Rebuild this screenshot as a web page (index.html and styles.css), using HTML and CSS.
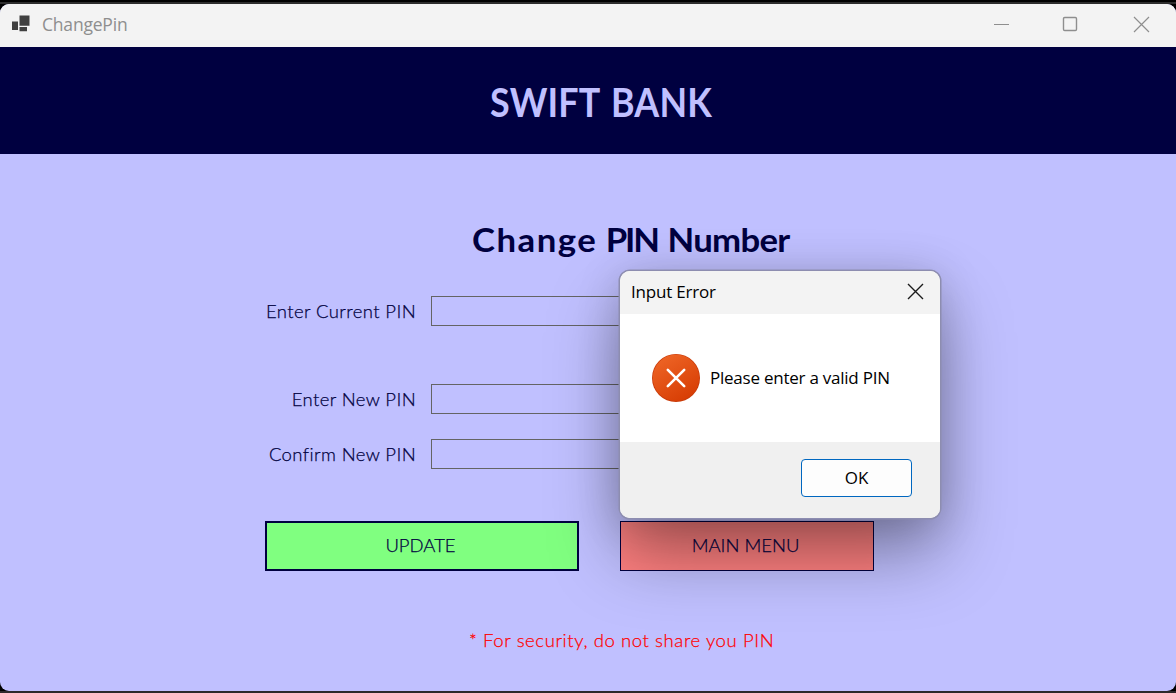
FILE: index.html
```html
<!DOCTYPE html>
<html lang="en">
<head>
<meta charset="utf-8">
<title>ChangePin</title>
<link rel="stylesheet" href="styles.css">
</head>
<body>
<div class="window">
  <div class="titlebar">
    <svg class="app-icon" width="20" height="18" viewBox="0 0 20 18"><path fill="#404040" d="M8.500 .5h10v10.200h-10zM1 6.500h6v8.500H1zM8.500 12h7.500v4.200H8.500z"/></svg>
    <span class="app-title">ChangePin</span>
    <svg class="controls" width="160" height="18" viewBox="0 0 160 18" fill="none" stroke="#8e8e8e"><path d="M1 8.500h15"/><rect x="70.500" y="1.500" width="13" height="13" rx="1.200" stroke-width="1.400"/><path stroke-width="1.200" d="M141 1l15 15M156 1l-15 15"/></svg>
  </div>
  <header class="banner"><h1 class="bank">SWIFT BANK</h1></header>
  <main class="content">
    <h2 class="heading"><span class="wide">Change</span> <span class="tight">PIN</span> <span class="snug">Number</span></h2>
    <div class="field first"><label class="label" for="current">Enter Current PIN</label><input class="input" id="current"></div>
    <div class="field second"><label class="label" for="new">Enter New PIN</label><input class="input" id="new"></div>
    <div class="field"><label class="label" for="confirm">Confirm New PIN</label><input class="input" id="confirm"></div>
    <div class="actions">
      <button class="btn update">UPDATE</button>
      <button class="btn menu">MAIN MENU</button>
    </div>
    <p class="note">* For security, do not share you PIN</p>
  </main>
</div>
<section class="dialog" role="alertdialog">
  <div class="dialog-title"><span>Input Error</span><svg width="17" height="17" viewBox="0 0 17 17" fill="none" stroke="#1b1b1b" stroke-width="1.400"><path d="M1 1l15 15M16 1L1 16"/></svg></div>
  <div class="dialog-body">
    <svg width="48" height="48" viewBox="0 0 48 48"><defs><linearGradient id="g" x1=".2" y1="0" x2=".8" y2="1"><stop offset="0" stop-color="#ee6526"/><stop offset="1" stop-color="#d63b02"/></linearGradient></defs><circle cx="24" cy="24" r="24" fill="#c93a08"/><circle cx="24" cy="23.800" r="23.200" fill="url(#g)"/><path d="M15.800 15.800l16.400 16.400M32.200 15.800L15.800 32.200" stroke="#fff" stroke-width="2.600" stroke-linecap="round"/></svg>
    <span class="message">Please enter a valid PIN</span>
  </div>
  <div class="dialog-footer"><button class="ok">OK</button></div>
</section>
</body>
</html>
```
FILE: styles.css
```css
* { box-sizing: border-box; }
body {
  margin: 0;
  height: 693px;
  overflow: hidden;
  padding-top: 4px;
  background: linear-gradient(#000 2px, #2d2d2d 2px, #2d2d2d 4px, #000 4px, #000 691px, #2d2a2d 691px);
  font-family: Lato, "Liberation Sans", sans-serif;
  color: #000040;
}
h1, h2, p { margin: 0; }
.window {
  height: 687px;
  border-radius: 9px;
  overflow: hidden;
  background: #c0c0ff;
}
.titlebar {
  height: 43px;
  display: flex;
  align-items: center;
  padding: 0 23px 2px 11px;
  background: #f3f3f3;
  font-family: "Open Sans", "Noto Sans", sans-serif;
  color: #8e8e8e;
}
.app-icon { margin-bottom: 1px; }
.app-title { margin: 0 0 2px 11px; font-size: 17.5px; letter-spacing: -0.2px; }
.controls { margin-left: auto; }
.banner {
  height: 107px;
  padding: 30px 0 0 490px;
  background: #000040;
  color: #c0c0ff;
}
.bank { font-size: 40px; line-height: 50px; letter-spacing: 0.2px; word-spacing: 3px; white-space: nowrap; transform: scaleX(.896); transform-origin: 0 0; }
.content { padding: 63px 0 0 265px; }
.heading { height: 79px; margin-left: 207px; font-size: 33px; line-height: 44px; white-space: nowrap; transform: scaleX(1.053); transform-origin: 0 0; }
.wide { letter-spacing: 1.4px; }
.tight { letter-spacing: -2px; margin-right: 1px; }
.snug { letter-spacing: -0.7px; }
.field { display: flex; gap: 15px; height: 30px; }
.first { margin-bottom: 58px; }
.second { margin-bottom: 25px; }
.label, .btn, .note { -webkit-text-stroke: 0.25px currentColor; }
.label { width: 151px; font-size: 18.5px; font-weight: 300; line-height: 30px; letter-spacing: 0.4px; text-align: right; white-space: nowrap; }
.input { width: 443px; height: 30px; border: 1px solid #646464; background: transparent; }
.actions { display: flex; gap: 41px; margin-top: 52px; }
.btn { height: 50px; font: 300 18.5px Lato, sans-serif; color: #000040; padding: 0 3px 2px 0; }
.update { width: 314px; border: 2px solid #000040; background: #80ff80; }
.menu { width: 254px; border: 1px solid #000040; background: #ff8080; }
.note { margin-top: 54px; padding-left: 204px; font-size: 18.5px; font-weight: 300; line-height: 30px; letter-spacing: 0.6px; color: #f00; white-space: nowrap; }
.dialog {
  position: absolute;
  left: 620px;
  top: 271px;
  width: 320px;
  height: 247px;
  border-radius: 10px;
  background: #fff;
  box-shadow: 0 0 0 1.5px #8d8db0, 0 36px 70px rgba(0,0,0,.36), 0 4px 44px rgba(0,0,0,.17);
  color: #000;
  font-family: "Open Sans", "Noto Sans", sans-serif;
  font-size: 17px;
}
.dialog-title {
  display: flex;
  height: 43px;
  align-items: center;
  justify-content: space-between;
  padding: 0 16px 2px 11px;
  border-radius: 10px 10px 0 0;
  background: #f3f3f3;
  letter-spacing: -0.2px;
}
.dialog-body { display: flex; height: 128px; align-items: center; gap: 10px; padding-left: 32px; }
.message { margin-bottom: 2px; letter-spacing: -0.24px; white-space: nowrap; }
.dialog-footer { height: 76px; padding: 17px 28px; border-radius: 0 0 10px 10px; background: #f0f0f0; }
.ok {
  display: block;
  margin-left: auto;
  width: 111px;
  height: 38px;
  padding: 0 0 2px;
  border: 1px solid #0067c0;
  border-radius: 4px;
  background: #fdfdfd;
  font: 17px "Open Sans", sans-serif;
  color: #000;
}
```
